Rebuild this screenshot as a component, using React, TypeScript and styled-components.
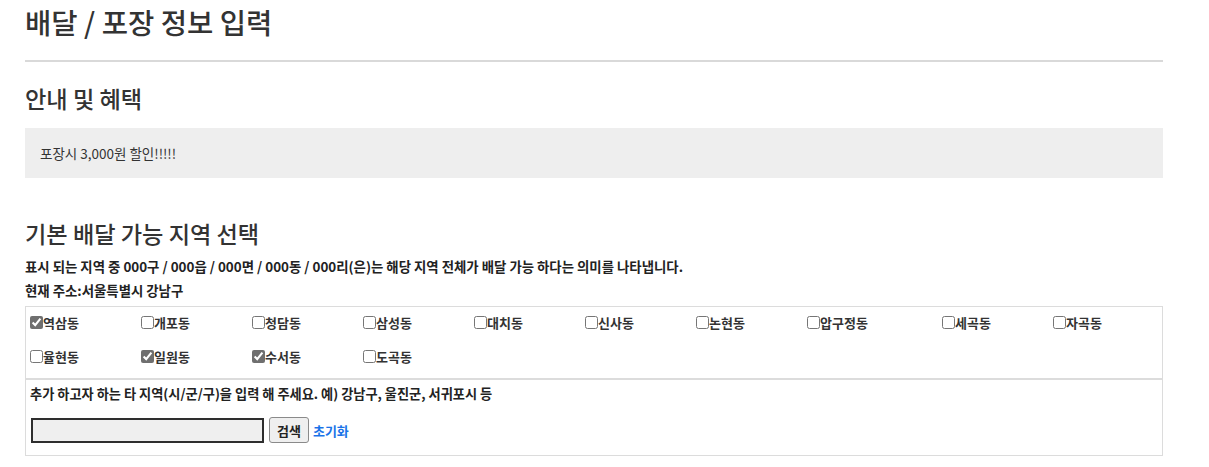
import React from "react";
import styled, { createGlobalStyle } from "styled-components";

const GlobalStyle = createGlobalStyle`
  html, body { margin: 0; padding: 0; background: #fff; }
  body {
    font-family: "Noto Sans CJK KR", "Noto Sans", sans-serif;
    color: #333;
  }
`;

const Page = styled.div`
  width: 1138px;
  margin-left: 25px;
  padding-top: 4px;
`;

const Title = styled.h1`
  margin: 0;
  font-size: 28.6px;
  font-weight: 500;
  line-height: 36px;
  color: #333;
`;

const Rule = styled.hr`
  margin: 20px 0 0;
  border: 0;
  height: 2px;
  background: #d9d9d9;
`;

const SectionTitle = styled.h2<{ $top: number }>`
  margin: ${(p) => p.$top}px 0 0;
  font-size: 23.2px;
  font-weight: 500;
  line-height: 30px;
  color: #333;
`;

const Notice = styled.div`
  margin-top: 15px;
  background: #eeeeee;
  height: 50px;
  padding: 0 15px;
  display: flex;
  align-items: center;
  font-size: 13.5px;
  color: #333;
`;

const InfoLine = styled.p<{ $top: number }>`
  margin: ${(p) => p.$top}px 0 0;
  font-size: 13.4px;
  font-weight: 700;
  line-height: 18px;
  color: #222;
`;

const Panel = styled.div`
  margin-top: 7px;
  border: 1px solid #dcdcdc;
`;

const AreaGrid = styled.div`
  display: grid;
  grid-template-columns: repeat(7, 111px) 135px 111px 1fr;
  row-gap: 4px;
  padding: 0 0 7px 4px;
  border-bottom: 2px solid #dcdcdc;
`;

const AreaLabel = styled.label`
  display: flex;
  align-items: center;
  height: 30px;
  font-size: 13px;
  font-weight: 700;
  color: #333;
  white-space: nowrap;
`;

const Check = styled.input`
  width: 13px;
  height: 13px;
  margin: 0;
  accent-color: #6f6f6f;
`;

const AddBlock = styled.div`
  padding: 4px 4px 12px 4px;
`;

const AddText = styled.p`
  margin: 0;
  font-size: 13.2px;
  font-weight: 700;
  line-height: 20px;
  color: #222;
`;

const SearchRow = styled.div`
  margin-top: 13px;
  display: flex;
  align-items: center;
  gap: 5px;
  height: 26px;
`;

const SearchInput = styled.input`
  box-sizing: border-box;
  width: 233px;
  height: 25px;
  margin: 0 0 0 1px;
  border: 2px solid #2e2e2e;
  background: #efefef;
  padding: 0 4px;
`;

const SearchButton = styled.button`
  box-sizing: border-box;
  height: 26px;
  padding: 0 7px;
  border: 1px solid #8a8a8a;
  border-radius: 3px;
  background: #efefef;
  font-family: inherit;
  font-size: 13px;
  font-weight: 700;
  color: #222;
`;

const ResetLink = styled.a`
  margin-left: -1px;
  font-size: 13px;
  font-weight: 700;
  color: #1a73e8;
  text-decoration: none;
`;

const areas: { name: string; checked: boolean }[] = [
  { name: "역삼동", checked: true },
  { name: "개포동", checked: false },
  { name: "청담동", checked: false },
  { name: "삼성동", checked: false },
  { name: "대치동", checked: false },
  { name: "신사동", checked: false },
  { name: "논현동", checked: false },
  { name: "압구정동", checked: false },
  { name: "세곡동", checked: false },
  { name: "자곡동", checked: false },
  { name: "율현동", checked: false },
  { name: "일원동", checked: true },
  { name: "수서동", checked: true },
  { name: "도곡동", checked: false },
];

export default function App() {
  return (
    <>
      <GlobalStyle />
      <Page>
        <Title>배달 / 포장 정보 입력</Title>
        <Rule />
        <SectionTitle $top={21}>안내 및 혜택</SectionTitle>
        <Notice>포장시 3,000원 할인!!!!!</Notice>
        <SectionTitle $top={40}>기본 배달 가능 지역 선택</SectionTitle>
        <InfoLine $top={9}>
          표시 되는 지역 중 000구 / 000읍 / 000면 / 000동 / 000리(은)는 해당 지역 전체가 배달 가능 하다는 의미를 나타냅니다.
        </InfoLine>
        <InfoLine $top={6}>현재 주소:서울특별시 강남구</InfoLine>
        <Panel>
          <AreaGrid>
            {areas.map((a) => (
              <AreaLabel key={a.name}>
                <Check type="checkbox" defaultChecked={a.checked} />
                {a.name}
              </AreaLabel>
            ))}
          </AreaGrid>
          <AddBlock>
            <AddText>
              추가 하고자 하는 타 지역(시/군/구)을 입력 해 주세요. 예) 강남구, 울진군, 서귀포시 등
            </AddText>
            <SearchRow>
              <SearchInput type="text" />
              <SearchButton type="button">검색</SearchButton>
              <ResetLink href="#">초기화</ResetLink>
            </SearchRow>
          </AddBlock>
        </Panel>
      </Page>
    </>
  );
}
